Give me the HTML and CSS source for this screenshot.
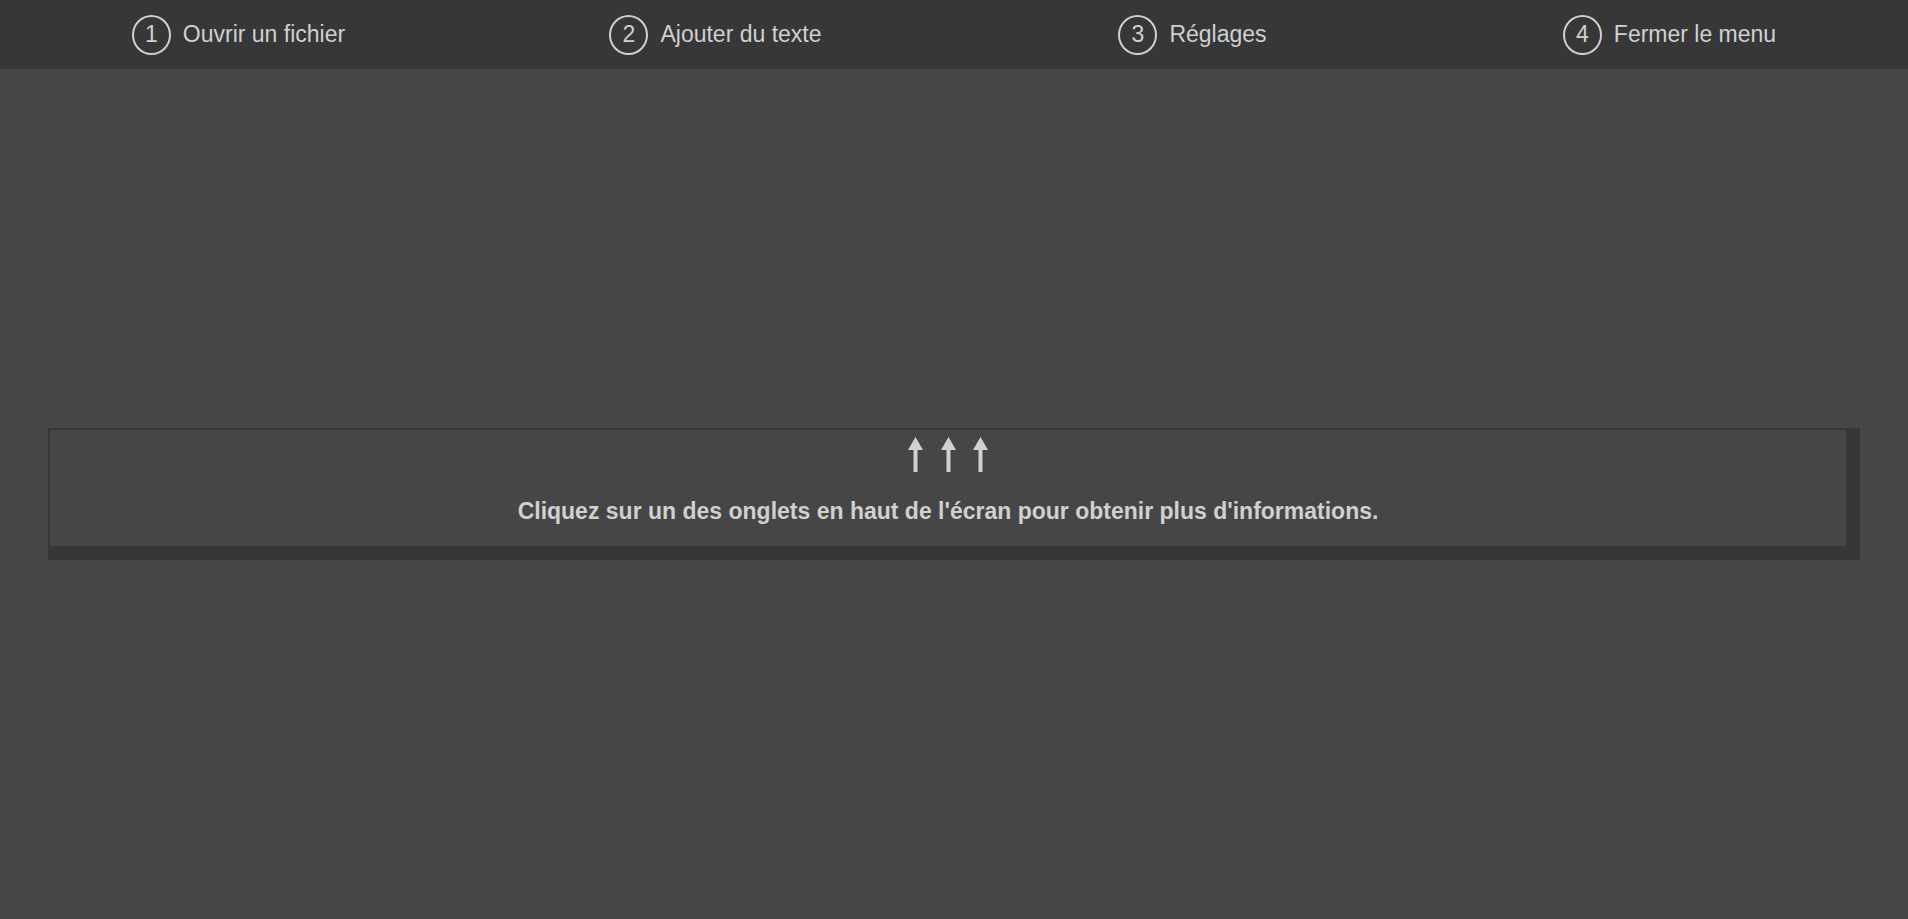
FILE: index.html
```html
<!DOCTYPE html>
<html lang="fr">
<head>
<meta charset="utf-8">
<title>Aide</title>
<link rel="stylesheet" href="styles.css">
</head>
<body>
<nav class="tabs">
  <div class="tab"><span class="num">1</span><span class="label">Ouvrir un fichier</span></div>
  <div class="tab"><span class="num">2</span><span class="label">Ajouter du texte</span></div>
  <div class="tab"><span class="num">3</span><span class="label">Réglages</span></div>
  <div class="tab"><span class="num">4</span><span class="label">Fermer le menu</span></div>
</nav>
<main class="stage">
  <section class="hint">
    <div class="arrows">
      <svg class="arrow" viewBox="0 0 15 35" width="15" height="35"><polygon points="7.5,0 15,13 0,13"/><rect x="5.5" y="12" width="4" height="23"/></svg>
      <svg class="arrow" viewBox="0 0 15 35" width="15" height="35"><polygon points="7.5,0 15,13 0,13"/><rect x="5.5" y="12" width="4" height="23"/></svg>
      <svg class="arrow" viewBox="0 0 15 35" width="15" height="35"><polygon points="7.5,0 15,13 0,13"/><rect x="5.5" y="12" width="4" height="23"/></svg>
    </div>
    <p class="hint-text">Cliquez sur un des onglets en haut de l'écran pour obtenir plus d'informations.</p>
  </section>
</main>
</body>
</html>
```

FILE: styles.css
```css
html, body {
  margin: 0;
  padding: 0;
  height: 100%;
}
body {
  background: #464646;
  color: #d0d0d0;
  font-family: "Liberation Sans", Arial, sans-serif;
  display: flex;
  flex-direction: column;
}
.tabs {
  height: 69px;
  flex: 0 0 69px;
  background: #373737;
  display: grid;
  grid-template-columns: repeat(4, 1fr);
  align-items: center;
}
.tab {
  display: flex;
  align-items: center;
  justify-content: center;
  gap: 12px;
}
.num {
  box-sizing: border-box;
  width: 39px;
  height: 40px;
  border: 2px solid #d0d0d0;
  border-radius: 50%;
  display: flex;
  align-items: center;
  justify-content: center;
  font-size: 23px;
  line-height: 1;
}
.label {
  font-size: 23px;
  line-height: 1;
}
.stage {
  flex: 1;
  display: flex;
  align-items: center;
  padding: 0 48px;
}
.hint {
  flex: 1;
  border-style: solid;
  border-color: #373737;
  border-width: 2px 14px 14px 2px;
  height: 116px;
  display: flex;
  flex-direction: column;
  align-items: center;
}
.arrows {
  margin-top: 7px;
  display: flex;
  gap: 17.5px;
  height: 35px;
}
.arrow {
  fill: #d0d0d0;
  display: block;
}
.hint-text {
  margin: 27px 0 0;
  font-weight: bold;
  font-size: 23px;
  line-height: 24px;
}
```
